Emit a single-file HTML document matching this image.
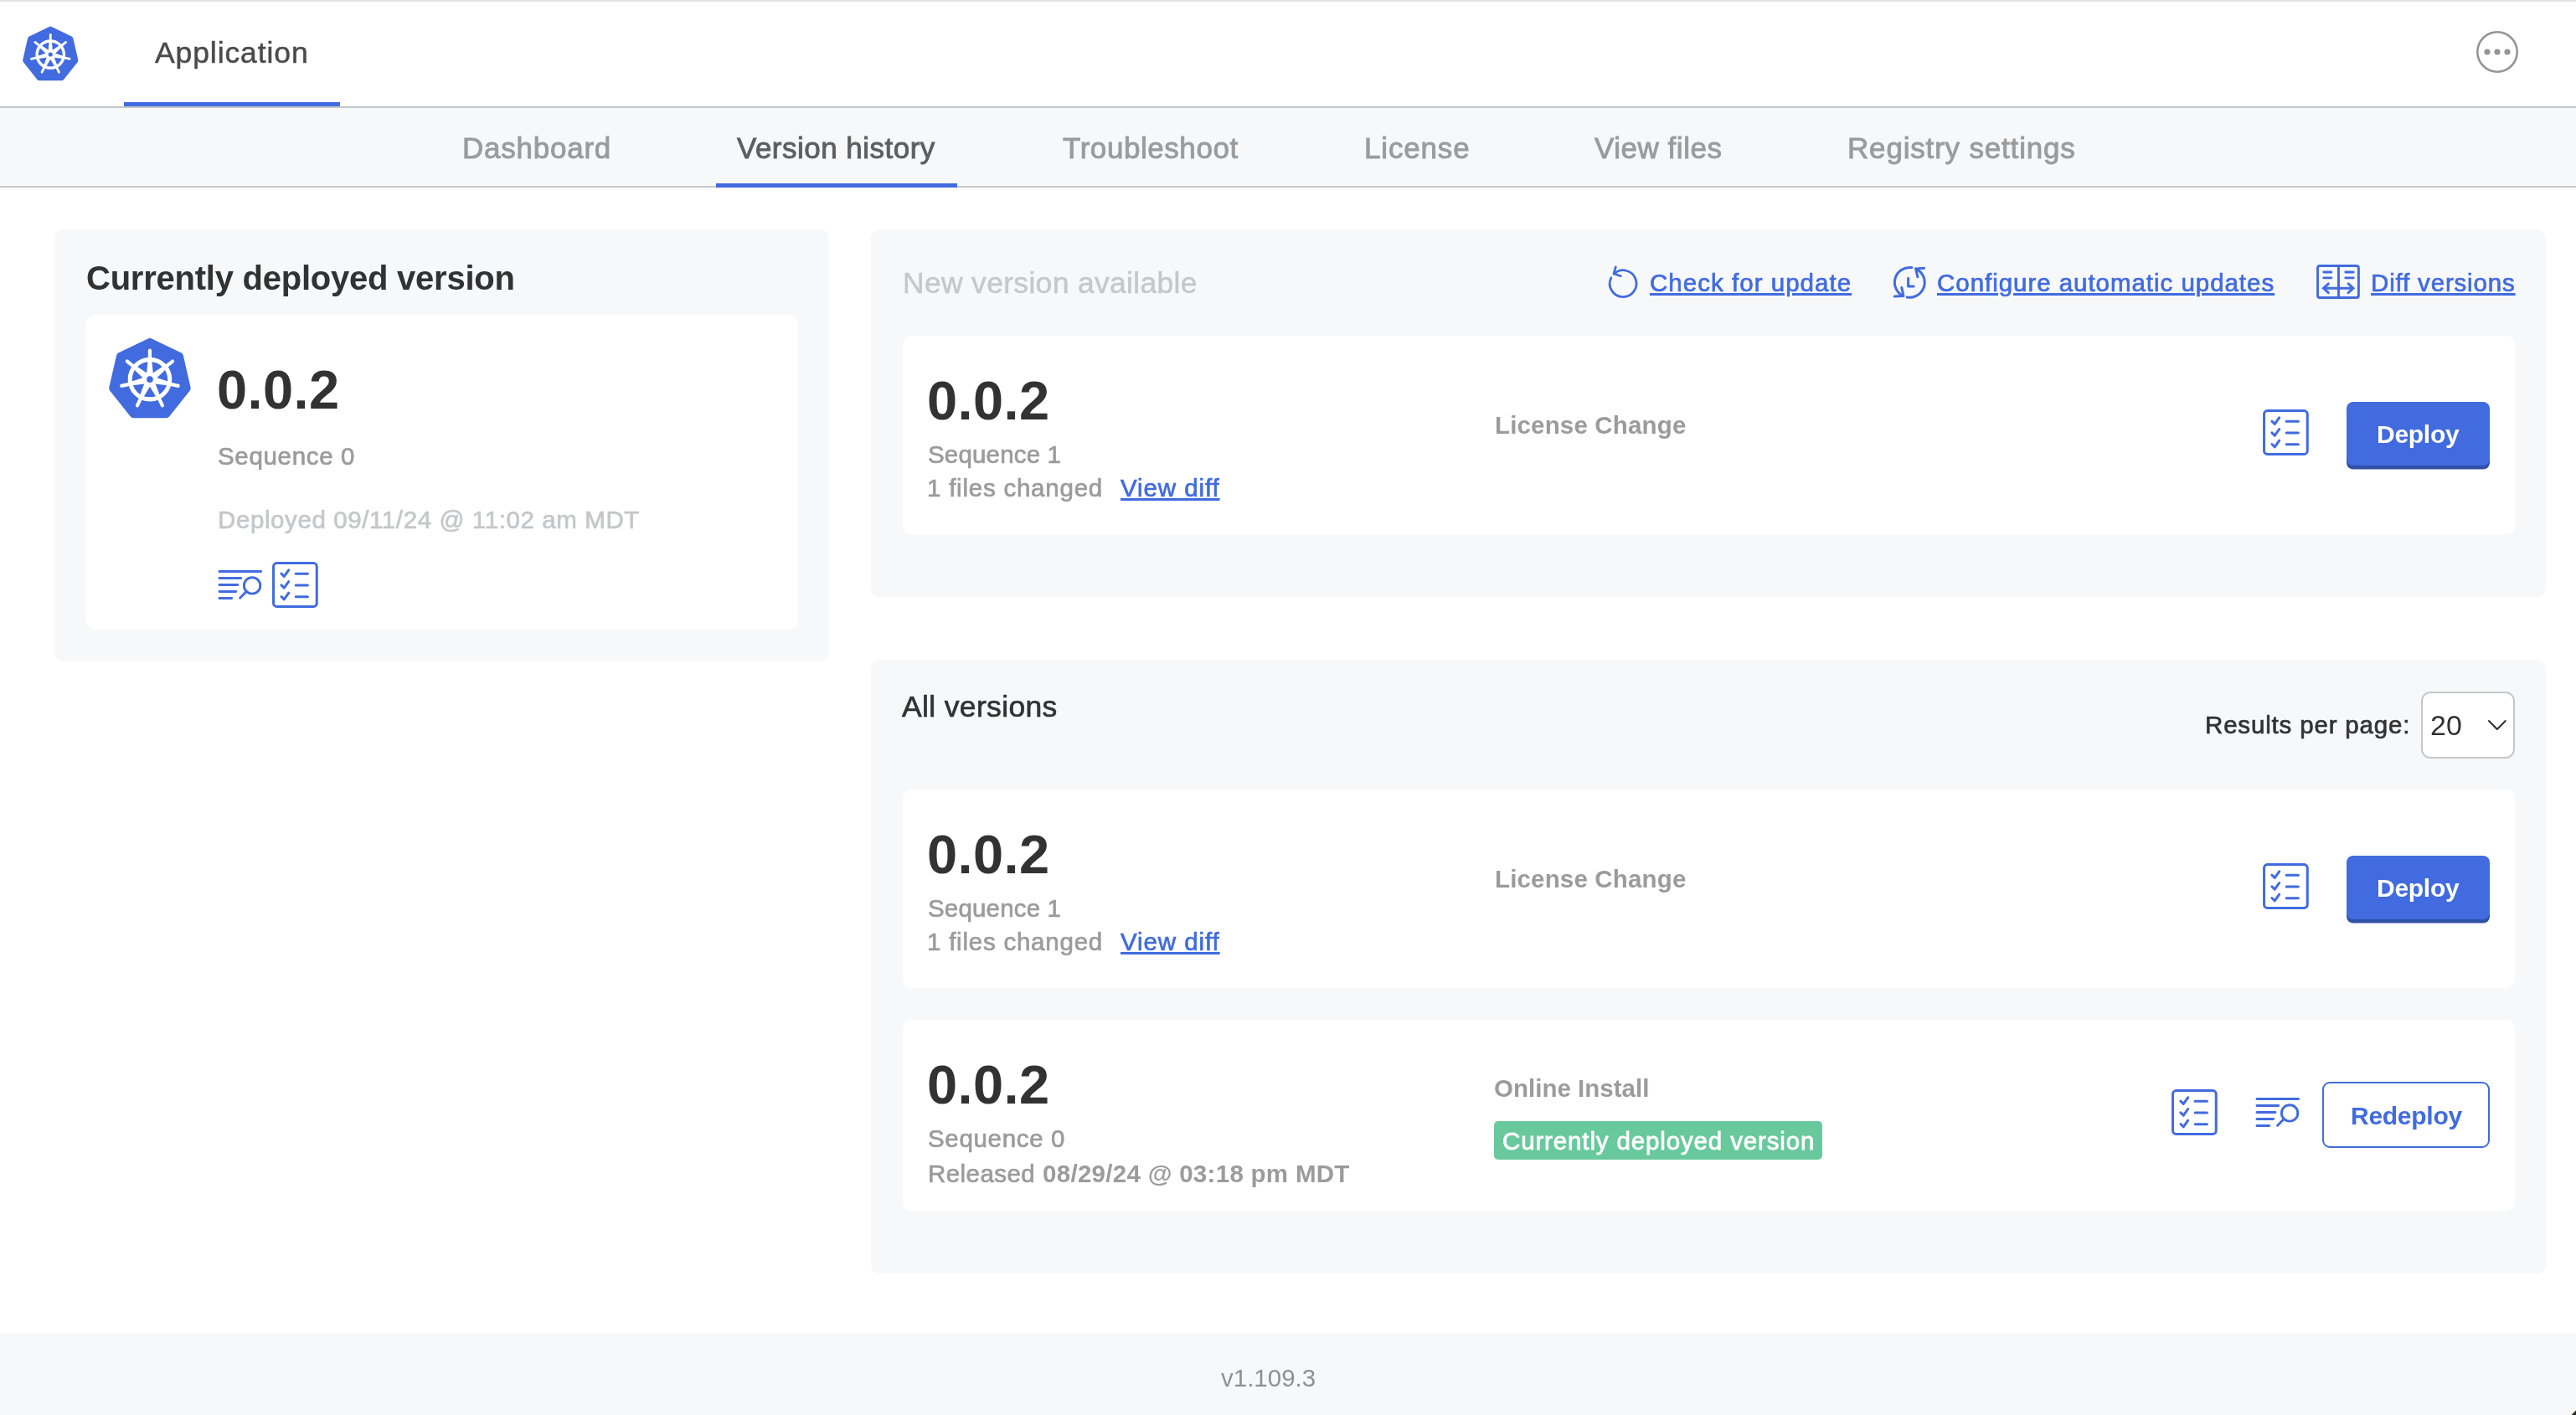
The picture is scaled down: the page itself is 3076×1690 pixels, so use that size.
<!DOCTYPE html>
<html lang="en"><head><meta charset="utf-8"><title>Application - Version history</title>
<style>
*{box-sizing:border-box;margin:0;padding:0}
html,body{width:3076px;height:1690px;overflow:hidden;background:#fff}
body{position:relative;font-family:"Liberation Sans",sans-serif}
.t,.box{position:absolute}
.t{white-space:nowrap;line-height:1;display:block;will-change:transform;text-decoration:none}
.ul{text-decoration:underline;text-decoration-thickness:3px;text-underline-offset:1.5px;text-decoration-skip-ink:auto}
.panel{background:#f7f8fa;border-radius:10px}
.card{background:#fff;border-radius:10px}
.btn-primary{background:#416bdf;border-radius:8px;box-shadow:0 4.5px 0 #3050a6}
.btn-secondary{background:#fff;border:2px solid #416bdf;border-radius:9px}
.select{background:#fff;border:2px solid #c4c8ca;border-radius:11px}
.badge{background:#68c99c;border-radius:5px}
svg{position:absolute;overflow:visible}
.ic{fill:none;stroke:#416bdf;stroke-width:3;stroke-linecap:round;stroke-linejoin:round}
</style></head>
<body>
<header>
<div class="box" style="left:0px;top:0px;width:3076px;height:2px;background:#e1e4e2"></div>
<div class="box" style="left:0px;top:127px;width:3076px;height:2px;background:#c4c8ca"></div>
<svg style="left:0;top:0" width="1" height="1"><g transform="translate(60.25 65.45) scale(0.679)"><polygon points="0.00,-44.85 35.07,-27.96 43.73,9.98 19.46,40.41 -19.46,40.41 -43.73,9.98 -35.07,-27.96" fill="#416bdf" stroke="#416bdf" stroke-width="10.0" stroke-linejoin="round"/><circle cx="0" cy="-0.6" r="23.75" fill="none" stroke="#fff" stroke-width="5.1"/><g transform="translate(0 -0.6) rotate(-90.00)"><polygon points="0,-4.5 21.5,-2.5 21.5,2.5 0,4.5" fill="#fff"/><line x1="20" y1="0" x2="34.6" y2="0" stroke="#fff" stroke-width="4.2" stroke-linecap="round"/></g><g transform="translate(0 -0.6) rotate(-38.57)"><polygon points="0,-4.5 21.5,-2.5 21.5,2.5 0,4.5" fill="#fff"/><line x1="20" y1="0" x2="34.6" y2="0" stroke="#fff" stroke-width="4.2" stroke-linecap="round"/></g><g transform="translate(0 -0.6) rotate(12.86)"><polygon points="0,-4.5 21.5,-2.5 21.5,2.5 0,4.5" fill="#fff"/><line x1="20" y1="0" x2="34.6" y2="0" stroke="#fff" stroke-width="4.2" stroke-linecap="round"/></g><g transform="translate(0 -0.6) rotate(64.29)"><polygon points="0,-4.5 21.5,-2.5 21.5,2.5 0,4.5" fill="#fff"/><line x1="20" y1="0" x2="34.6" y2="0" stroke="#fff" stroke-width="4.2" stroke-linecap="round"/></g><g transform="translate(0 -0.6) rotate(115.71)"><polygon points="0,-4.5 21.5,-2.5 21.5,2.5 0,4.5" fill="#fff"/><line x1="20" y1="0" x2="34.6" y2="0" stroke="#fff" stroke-width="4.2" stroke-linecap="round"/></g><g transform="translate(0 -0.6) rotate(167.14)"><polygon points="0,-4.5 21.5,-2.5 21.5,2.5 0,4.5" fill="#fff"/><line x1="20" y1="0" x2="34.6" y2="0" stroke="#fff" stroke-width="4.2" stroke-linecap="round"/></g><g transform="translate(0 -0.6) rotate(218.57)"><polygon points="0,-4.5 21.5,-2.5 21.5,2.5 0,4.5" fill="#fff"/><line x1="20" y1="0" x2="34.6" y2="0" stroke="#fff" stroke-width="4.2" stroke-linecap="round"/></g><circle cx="0" cy="-0.6" r="3.8" fill="#416bdf"/></g></svg>
<span class="t" style="left:185.4px;top:45.7px;font-size:35.5px;font-weight:400;letter-spacing:0.9px;color:#4a4a4a;-webkit-text-stroke:0.5px #4a4a4a;">Application</span>
<div class="box" style="left:148px;top:122px;width:258px;height:5px;background:#416bdf"></div>
<svg style="left:2952px;top:32px" width="60" height="60" viewBox="0 0 60 60"><circle cx="30" cy="30" r="23.7" fill="none" stroke="#959595" stroke-width="2.6"/><circle cx="18" cy="30" r="3.6" fill="#959595"/><circle cx="30" cy="30" r="3.6" fill="#959595"/><circle cx="42" cy="30" r="3.6" fill="#959595"/></svg>
</header>
<nav>
<div class="box" style="left:0px;top:129px;width:3076px;height:93px;background:#f7f8fa"></div>
<div class="box" style="left:0px;top:222px;width:3076px;height:2px;background:#c4c8ca"></div>
<span class="t" style="left:552.3px;top:159.0px;font-size:35.0px;font-weight:400;letter-spacing:0.76px;color:#9b9b9b;-webkit-text-stroke:0.9px #9b9b9b;">Dashboard</span>
<span class="t" style="left:880.4px;top:159.0px;font-size:35.0px;font-weight:400;letter-spacing:0.48px;color:#5e5e5e;-webkit-text-stroke:0.9px #5e5e5e;">Version history</span>
<span class="t" style="left:1268.7px;top:159.0px;font-size:35.0px;font-weight:400;letter-spacing:0.56px;color:#9b9b9b;-webkit-text-stroke:0.9px #9b9b9b;">Troubleshoot</span>
<span class="t" style="left:1628.5px;top:159.0px;font-size:35.0px;font-weight:400;letter-spacing:0.83px;color:#9b9b9b;-webkit-text-stroke:0.9px #9b9b9b;">License</span>
<span class="t" style="left:1903.7px;top:159.0px;font-size:35.0px;font-weight:400;letter-spacing:0.53px;color:#9b9b9b;-webkit-text-stroke:0.9px #9b9b9b;">View files</span>
<span class="t" style="left:2205.8px;top:159.0px;font-size:35.0px;font-weight:400;letter-spacing:0.82px;color:#9b9b9b;-webkit-text-stroke:0.9px #9b9b9b;">Registry settings</span>
<div class="box" style="left:855px;top:219px;width:287.7px;height:5px;background:#416bdf"></div>
</nav>
<main>
<section>
<div class="box panel" style="left:65px;top:274px;width:925px;height:516px;"></div>
<span class="t" style="left:102.9px;top:312.0px;font-size:40.0px;font-weight:700;letter-spacing:-0.24px;color:#323232;">Currently deployed version</span>
<div class="box card" style="left:103px;top:376px;width:850px;height:376px;"></div>
<svg style="left:0;top:0" width="1" height="1"><g transform="translate(178.95 453.75) scale(1.0)"><polygon points="0.00,-44.85 35.07,-27.96 43.73,9.98 19.46,40.41 -19.46,40.41 -43.73,9.98 -35.07,-27.96" fill="#416bdf" stroke="#416bdf" stroke-width="10.0" stroke-linejoin="round"/><circle cx="0" cy="-0.6" r="23.75" fill="none" stroke="#fff" stroke-width="5.1"/><g transform="translate(0 -0.6) rotate(-90.00)"><polygon points="0,-4.5 21.5,-2.5 21.5,2.5 0,4.5" fill="#fff"/><line x1="20" y1="0" x2="34.6" y2="0" stroke="#fff" stroke-width="4.2" stroke-linecap="round"/></g><g transform="translate(0 -0.6) rotate(-38.57)"><polygon points="0,-4.5 21.5,-2.5 21.5,2.5 0,4.5" fill="#fff"/><line x1="20" y1="0" x2="34.6" y2="0" stroke="#fff" stroke-width="4.2" stroke-linecap="round"/></g><g transform="translate(0 -0.6) rotate(12.86)"><polygon points="0,-4.5 21.5,-2.5 21.5,2.5 0,4.5" fill="#fff"/><line x1="20" y1="0" x2="34.6" y2="0" stroke="#fff" stroke-width="4.2" stroke-linecap="round"/></g><g transform="translate(0 -0.6) rotate(64.29)"><polygon points="0,-4.5 21.5,-2.5 21.5,2.5 0,4.5" fill="#fff"/><line x1="20" y1="0" x2="34.6" y2="0" stroke="#fff" stroke-width="4.2" stroke-linecap="round"/></g><g transform="translate(0 -0.6) rotate(115.71)"><polygon points="0,-4.5 21.5,-2.5 21.5,2.5 0,4.5" fill="#fff"/><line x1="20" y1="0" x2="34.6" y2="0" stroke="#fff" stroke-width="4.2" stroke-linecap="round"/></g><g transform="translate(0 -0.6) rotate(167.14)"><polygon points="0,-4.5 21.5,-2.5 21.5,2.5 0,4.5" fill="#fff"/><line x1="20" y1="0" x2="34.6" y2="0" stroke="#fff" stroke-width="4.2" stroke-linecap="round"/></g><g transform="translate(0 -0.6) rotate(218.57)"><polygon points="0,-4.5 21.5,-2.5 21.5,2.5 0,4.5" fill="#fff"/><line x1="20" y1="0" x2="34.6" y2="0" stroke="#fff" stroke-width="4.2" stroke-linecap="round"/></g><circle cx="0" cy="-0.6" r="3.8" fill="#416bdf"/></g></svg>
<span class="t" style="left:259.1px;top:432.7px;font-size:65px;font-weight:700;letter-spacing:0.4px;color:#323232;">0.0.2</span>
<span class="t" style="left:260.1px;top:529.8px;font-size:29.5px;font-weight:400;letter-spacing:0.67px;color:#9b9b9b;-webkit-text-stroke:0.7px #9b9b9b;">Sequence 0</span>
<span class="t" style="left:259.6px;top:606.0px;font-size:29.5px;font-weight:400;letter-spacing:0.6px;color:#c4c8ca;-webkit-text-stroke:0.7px #c4c8ca;">Deployed 09/11/24 @ 11:02 am MDT</span>
<svg class="ic" style="left:259.6px;top:681px;stroke-width:2.9" width="54" height="36" viewBox="0 0 54 36"><line x1="2" y1="1.5" x2="51.6" y2="1.5"/><line x1="2" y1="9.5" x2="27.7" y2="9.5"/><line x1="2" y1="17.5" x2="23.9" y2="17.5"/><line x1="2" y1="25.5" x2="21.7" y2="25.5"/><line x1="2" y1="33.5" x2="16.7" y2="33.5"/><circle cx="41.1" cy="18.4" r="9.7"/><line x1="34.2" y1="25.4" x2="26.6" y2="33.3"/></svg>
<svg class="ic" style="left:325.1px;top:670.9px" width="55" height="55" viewBox="0 0 55 55"><rect x="1.55" y="1.55" width="51.7" height="51.9" rx="4"/><polyline points="10.9,14.10 14.3,17.40 19.7,9.80"/><line x1="28.2" y1="14.30" x2="42.4" y2="14.30"/><polyline points="10.9,27.80 14.3,31.10 19.7,23.50"/><line x1="28.2" y1="28.00" x2="42.4" y2="28.00"/><polyline points="10.9,41.50 14.3,44.80 19.7,37.20"/><line x1="28.2" y1="41.70" x2="42.4" y2="41.70"/></svg>
</section>
<section>
<div class="box panel" style="left:1040px;top:274px;width:2000px;height:438.5px;"></div>
<span class="t" style="left:1077.8px;top:321.2px;font-size:35.5px;font-weight:400;letter-spacing:0.31px;color:#c4c8ca;-webkit-text-stroke:0.5px #c4c8ca;">New version available</span>
<svg class="ic" style="left:1920px;top:317px;stroke-width:2.75" width="40" height="42" viewBox="0 0 40 42"><path d="M7.26 10.07 A15.9 15.9 0 1 1 3.81 14.73"/><polyline points="9.3,1.8 7,9.7 15.2,12.7"/></svg>
<a class="t ul" style="left:1970.1px;top:322.5px;font-size:29.5px;font-weight:400;letter-spacing:1.03px;color:#416bdf;-webkit-text-stroke:0.7px #416bdf;">Check for update</a>
<svg class="ic" style="left:2260px;top:317px" width="42" height="42" viewBox="0 0 42 42"><path d="M22.79 2.57 A17.9 17.9 0 0 0 12.74 36.52"/><polyline points="10.8,26.4 12.9,36.4 2.2,37"/><path d="M17.19 37.93 A17.9 17.9 0 0 0 27.72 4.01"/><polyline points="37.6,3.2 27.7,3.9 29.8,13.8"/><polyline points="18.6,15.2 18.6,24.9 25.2,24.9"/></svg>
<a class="t ul" style="left:2313.2px;top:322.5px;font-size:29.5px;font-weight:400;letter-spacing:0.96px;color:#416bdf;-webkit-text-stroke:0.7px #416bdf;">Configure automatic updates</a>
<svg class="ic" style="left:2766px;top:316px;stroke-width:2.9" width="52" height="41" viewBox="0 0 52 41"><rect x="1.55" y="1.55" width="48.85" height="37.9" rx="2.5"/><line x1="26.5" y1="1.5" x2="26.5" y2="39.5" stroke-linecap="butt"/><line x1="8.8" y1="9" x2="17.8" y2="9"/><line x1="8.8" y1="15.9" x2="17.8" y2="15.9"/><line x1="34.8" y1="9" x2="44.2" y2="9"/><line x1="34.8" y1="15.9" x2="44.2" y2="15.9"/><line x1="9.5" y1="28.3" x2="43" y2="28.3"/><polyline points="14.4,22.9 8.4,28.3 14.4,33.7" stroke-linejoin="miter"/><polyline points="38.1,22.9 44.1,28.3 38.1,33.7" stroke-linejoin="miter"/></svg>
<a class="t ul" style="left:2830.9px;top:322.5px;font-size:29.5px;font-weight:400;letter-spacing:0.83px;color:#416bdf;-webkit-text-stroke:0.7px #416bdf;">Diff versions</a>
<div class="box card" style="left:1078px;top:401px;width:1925px;height:238px;"></div>
<span class="t" style="left:1106.6px;top:445.9px;font-size:65.0px;font-weight:700;letter-spacing:0.38px;color:#323232;">0.0.2</span>
<span class="t" style="left:1107.6px;top:528.1px;font-size:29.5px;font-weight:400;letter-spacing:0.17px;color:#9b9b9b;-webkit-text-stroke:0.7px #9b9b9b;">Sequence 1</span>
<span class="t" style="left:1107.0px;top:567.7px;font-size:29.5px;font-weight:400;letter-spacing:0.77px;color:#9b9b9b;-webkit-text-stroke:0.7px #9b9b9b;">1 files changed</span>
<a class="t ul" style="left:1338.4px;top:567.7px;font-size:29.5px;font-weight:400;letter-spacing:0.91px;color:#416bdf;-webkit-text-stroke:0.7px #416bdf;">View diff</a>
<span class="t" style="left:1784.7px;top:492.8px;font-size:29.5px;font-weight:700;letter-spacing:0.16px;color:#9b9b9b;">License Change</span>
<svg class="ic" style="left:2702px;top:488.9px" width="55" height="55" viewBox="0 0 55 55"><rect x="1.55" y="1.55" width="51.7" height="51.9" rx="4"/><polyline points="10.9,14.10 14.3,17.40 19.7,9.80"/><line x1="28.2" y1="14.30" x2="42.4" y2="14.30"/><polyline points="10.9,27.80 14.3,31.10 19.7,23.50"/><line x1="28.2" y1="28.00" x2="42.4" y2="28.00"/><polyline points="10.9,41.50 14.3,44.80 19.7,37.20"/><line x1="28.2" y1="41.70" x2="42.4" y2="41.70"/></svg>
<div class="box btn-primary" style="left:2802px;top:480px;width:171px;height:75.5px;"></div>
<span class="t" style="left:2838.1px;top:504.2px;font-size:30px;font-weight:700;letter-spacing:-0.28px;color:#ffffff;">Deploy</span>
</section>
<section>
<div class="box panel" style="left:1040px;top:788px;width:2000px;height:733px;"></div>
<span class="t" style="left:1077.2px;top:827.1px;font-size:35.5px;font-weight:400;letter-spacing:0.35px;color:#323232;-webkit-text-stroke:0.7px #323232;">All versions</span>
<span class="t" style="left:2633.1px;top:850.8px;font-size:29.5px;font-weight:400;letter-spacing:0.83px;color:#323232;-webkit-text-stroke:0.7px #323232;">Results per page:</span>
<div class="box select" style="left:2890.5px;top:826px;width:112.2px;height:79.6px;"></div>
<span class="t" style="left:2901.9px;top:848.9px;font-size:34.0px;font-weight:400;letter-spacing:0.2px;color:#323232;">20</span>
<svg style="left:2968px;top:856px" width="28" height="20" viewBox="0 0 28 20"><polyline points="4,5 13.8,15 23.7,5" fill="none" stroke="#323232" stroke-width="2.1" stroke-linecap="round" stroke-linejoin="round"/></svg>
<div class="box card" style="left:1078px;top:943px;width:1925px;height:237px;"></div>
<span class="t" style="left:1106.6px;top:987.9px;font-size:65.0px;font-weight:700;letter-spacing:0.38px;color:#323232;">0.0.2</span>
<span class="t" style="left:1107.6px;top:1070.1px;font-size:29.5px;font-weight:400;letter-spacing:0.17px;color:#9b9b9b;-webkit-text-stroke:0.7px #9b9b9b;">Sequence 1</span>
<span class="t" style="left:1107.0px;top:1109.7px;font-size:29.5px;font-weight:400;letter-spacing:0.77px;color:#9b9b9b;-webkit-text-stroke:0.7px #9b9b9b;">1 files changed</span>
<a class="t ul" style="left:1338.4px;top:1109.7px;font-size:29.5px;font-weight:400;letter-spacing:0.91px;color:#416bdf;-webkit-text-stroke:0.7px #416bdf;">View diff</a>
<span class="t" style="left:1784.7px;top:1034.8px;font-size:29.5px;font-weight:700;letter-spacing:0.16px;color:#9b9b9b;">License Change</span>
<svg class="ic" style="left:2702px;top:1030.9px" width="55" height="55" viewBox="0 0 55 55"><rect x="1.55" y="1.55" width="51.7" height="51.9" rx="4"/><polyline points="10.9,14.10 14.3,17.40 19.7,9.80"/><line x1="28.2" y1="14.30" x2="42.4" y2="14.30"/><polyline points="10.9,27.80 14.3,31.10 19.7,23.50"/><line x1="28.2" y1="28.00" x2="42.4" y2="28.00"/><polyline points="10.9,41.50 14.3,44.80 19.7,37.20"/><line x1="28.2" y1="41.70" x2="42.4" y2="41.70"/></svg>
<div class="box btn-primary" style="left:2802px;top:1022px;width:171px;height:75.5px;"></div>
<span class="t" style="left:2838.1px;top:1046.2px;font-size:30px;font-weight:700;letter-spacing:-0.28px;color:#ffffff;">Deploy</span>
<div class="box card" style="left:1078px;top:1218px;width:1925px;height:227.5px;"></div>
<span class="t" style="left:1106.6px;top:1262.9px;font-size:65.0px;font-weight:700;letter-spacing:0.38px;color:#323232;">0.0.2</span>
<span class="t" style="left:1107.6px;top:1345.1px;font-size:29.5px;font-weight:400;letter-spacing:0.67px;color:#9b9b9b;-webkit-text-stroke:0.7px #9b9b9b;">Sequence 0</span>
<span class="t" style="left:1107.6px;top:1387.0px;font-size:29.5px;font-weight:400;letter-spacing:0.44px;color:#9b9b9b;-webkit-text-stroke:0.7px #9b9b9b;">Released</span>
<span class="t" style="left:1245.2px;top:1387.0px;font-size:29.5px;font-weight:700;letter-spacing:0.29px;color:#9b9b9b;">08/29/24 @ 03:18 pm MDT</span>
<span class="t" style="left:1784.0px;top:1285.1px;font-size:29.5px;font-weight:700;letter-spacing:0.01px;color:#9b9b9b;">Online Install</span>
<div class="box badge" style="left:1784.2px;top:1339px;width:391.7px;height:45.8px;"></div>
<span class="t" style="left:1793.7px;top:1347.6px;font-size:29.5px;font-weight:400;letter-spacing:0.86px;color:#ffffff;-webkit-text-stroke:0.8px #ffffff;">Currently deployed version</span>
<svg class="ic" style="left:2593.2px;top:1301.2px" width="55" height="55" viewBox="0 0 55 55"><rect x="1.55" y="1.55" width="51.7" height="51.9" rx="4"/><polyline points="10.9,14.10 14.3,17.40 19.7,9.80"/><line x1="28.2" y1="14.30" x2="42.4" y2="14.30"/><polyline points="10.9,27.80 14.3,31.10 19.7,23.50"/><line x1="28.2" y1="28.00" x2="42.4" y2="28.00"/><polyline points="10.9,41.50 14.3,44.80 19.7,37.20"/><line x1="28.2" y1="41.70" x2="42.4" y2="41.70"/></svg>
<svg class="ic" style="left:2692.6px;top:1311px;stroke-width:2.9" width="54" height="36" viewBox="0 0 54 36"><line x1="2" y1="1.5" x2="51.6" y2="1.5"/><line x1="2" y1="9.5" x2="27.7" y2="9.5"/><line x1="2" y1="17.5" x2="23.9" y2="17.5"/><line x1="2" y1="25.5" x2="21.7" y2="25.5"/><line x1="2" y1="33.5" x2="16.7" y2="33.5"/><circle cx="41.1" cy="18.4" r="9.7"/><line x1="34.2" y1="25.4" x2="26.6" y2="33.3"/></svg>
<div class="box btn-secondary" style="left:2773px;top:1292px;width:200px;height:79px;"></div>
<span class="t" style="left:2806.6px;top:1317.9px;font-size:30.0px;font-weight:700;letter-spacing:-0.27px;color:#416bdf;">Redeploy</span>
</section>
</main>
<footer>
<div class="box" style="left:0px;top:1592px;width:3076px;height:98px;background:#f7f8fa"></div>
<span class="t" style="left:1458.0px;top:1630.7px;font-size:29.5px;font-weight:400;letter-spacing:-0.0px;color:#909090;">v1.109.3</span>
<svg style="left:3069px;top:1683px" width="7" height="7" viewBox="0 0 7 7"><path d="M7 1.5 L7 7 L1.5 7 Z" fill="#2b2a1c"/></svg>
</footer>
</body></html>
